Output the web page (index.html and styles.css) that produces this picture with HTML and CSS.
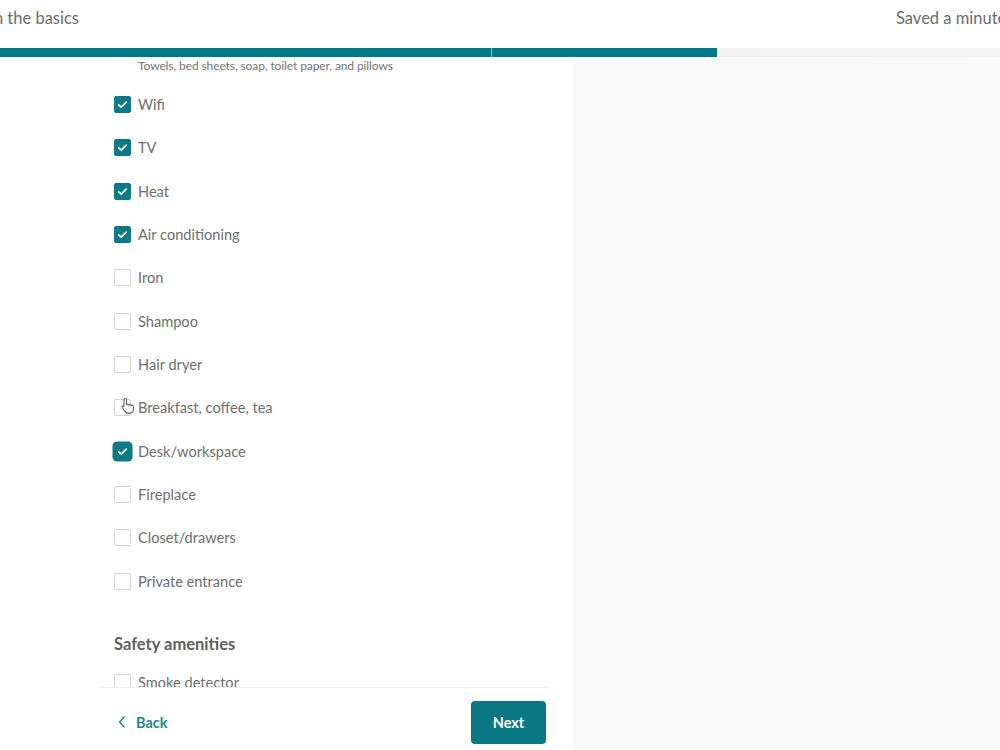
FILE: index.html
```html
<!DOCTYPE html>
<html lang="en">
<head>
  <meta charset="utf-8">
  <title>List your space - Amenities</title>
  <link rel="stylesheet" href="styles.css">
</head>
<body>

<div class="topbar">
  <div class="step-title"><span>Step 1: Start with the basics</span></div>
  <div class="saved">Saved a minute ago</div>
</div>

<div class="progress">
  <div class="progress-done"></div>
  <div class="progress-done short"></div>
</div>

<div class="page">
  <div class="form-panel">
    <div class="scroll-area">
      <p class="hint">Towels, bed sheets, soap, toilet paper, and pillows</p>

      <ul class="amenities">
        <li><span class="box checked"><svg viewBox="0 0 16 16"><path d="M4 8.3l2.6 2.5L12 5.4"/></svg></span>Wifi</li>
        <li><span class="box checked"><svg viewBox="0 0 16 16"><path d="M4 8.3l2.6 2.5L12 5.4"/></svg></span>TV</li>
        <li><span class="box checked"><svg viewBox="0 0 16 16"><path d="M4 8.3l2.6 2.5L12 5.4"/></svg></span>Heat</li>
        <li><span class="box checked"><svg viewBox="0 0 16 16"><path d="M4 8.3l2.6 2.5L12 5.4"/></svg></span>Air conditioning</li>
        <li><span class="box"></span>Iron</li>
        <li><span class="box"></span>Shampoo</li>
        <li><span class="box"></span>Hair dryer</li>
        <li class="hovered">
          <span class="box"></span>Breakfast, coffee, tea
          <svg class="pointer" viewBox="0 0 14 18">
            <path d="M4.5 1.5c.8 0 1.4.6 1.4 1.4v5.3c.2-.6.8-1 1.4-.9.7.1 1.1.6 1.2 1.2.3-.5.8-.8 1.4-.7.7.1 1.1.7 1.1 1.3.3-.4.8-.6 1.3-.5.7.2 1 .8 1 1.5v3.2c0 2.2-1.7 3.9-3.9 3.9H7.6c-1.2 0-2.2-.5-2.9-1.4L1.3 11.2c-.4-.5-.3-1.2.2-1.6.5-.4 1.2-.4 1.6.1l.1.1V2.9c0-.8.5-1.4 1.3-1.4z"/>
          </svg>
        </li>
        <li><span class="box checked focused"><svg viewBox="0 0 16 16"><path d="M4 8.3l2.6 2.5L12 5.4"/></svg></span>Desk/workspace</li>
        <li><span class="box"></span>Fireplace</li>
        <li><span class="box"></span>Closet/drawers</li>
        <li><span class="box"></span>Private entrance</li>
      </ul>

      <h3 class="section-title">Safety amenities</h3>
      <ul class="amenities">
        <li><span class="box"></span>Smoke detector</li>
        <li><span class="box"></span>Carbon monoxide detector</li>
      </ul>
    </div>

    <div class="footer">
      <a class="back" href="#">
        <svg viewBox="0 0 10 16"><path d="M7.5 2L2 8l5.5 6"/></svg>
        <span>Back</span>
      </a>
      <button class="next">Next</button>
    </div>
  </div>

  <div class="side-panel"></div>
</div>

</body>
</html>
```

FILE: styles.css
```css
* {
  margin: 0;
  padding: 0;
  box-sizing: border-box;
}
body {
  width: 1000px;
  height: 750px;
  overflow: hidden;
  background-color: #ffffff;
  font-family: Lato, "Open Sans", Arial, sans-serif;
  color: #666666;
}

/* top bar */
.topbar {
  height: 48px;
  display: flex;
  align-items: center;
  justify-content: space-between;
  font-size: 16.5px;
  color: #6a6a6a;
  overflow: hidden;
  white-space: nowrap;
}
.step-title {
  width: 79px;
  display: flex;
  justify-content: flex-end;
  overflow: hidden;
  margin-top: -12px;
}
.saved {
  width: 104px;
  overflow: hidden;
  margin-top: -12px;
}

/* progress */
.progress {
  height: 9px;
  display: flex;
  background: linear-gradient(to right, #ececec, #f1f1f1 60%, #f4f4f4);
}
.progress-done {
  width: 492px;
  background-color: #007a87;
  border-right: 1px solid #7cc3cb;
}
.progress-done.short {
  width: 225px;
  border-right: none;
}

/* body */
.page {
  display: flex;
  height: 693px;
}
.form-panel {
  width: 574px;
  display: flex;
  flex-direction: column;
  background-color: #ffffff;
}
.side-panel {
  flex: 1;
  background-color: #fafafb;
}

.scroll-area {
  flex: 1;
  overflow: hidden;
  padding: 1px 0 0 114px;
}
.hint {
  font-size: 12px;
  line-height: 16px;
  color: #747474;
  margin-left: 24px;
  letter-spacing: -0.1px;
}

.amenities {
  list-style: none;
  margin-top: 9px;
}
.amenities li {
  height: 43.33px;
  display: flex;
  align-items: center;
  font-size: 14.6px;
  color: #6e6e6e;
  position: relative;
}
.box {
  width: 17px;
  height: 17px;
  margin-right: 7px;
  border: 1px solid #d2d2d2;
  border-radius: 2px;
  background-color: #ffffff;
  display: flex;
  align-items: center;
  justify-content: center;
}
.box svg {
  width: 15px;
  height: 15px;
  fill: none;
  stroke: #ffffff;
  stroke-width: 1.8;
  stroke-linecap: round;
  stroke-linejoin: round;
}
.box.checked {
  background-color: #0d7b86;
  border-color: #0d7b86;
}
.box.focused {
  box-shadow: 0 0 0 1.5px #0d7b86;
  border-radius: 3px;
}

.pointer {
  position: absolute;
  left: 7px;
  top: 11px;
  width: 13px;
  height: 17px;
  fill: #ffffff;
  stroke: #555555;
  stroke-width: 1.1;
}

.section-title {
  font-size: 16.5px;
  line-height: 24px;
  font-weight: bold;
  color: #606060;
  margin-top: 29px;
}
.section-title + .amenities {
  margin-top: 5px;
}

/* bottom nav */
.footer {
  height: 63px;
  margin-left: 100px;
  width: 448px;
  border-top: 1px solid #f0f0f0;
  display: flex;
  align-items: center;
  justify-content: space-between;
  padding: 6px 2px 0 18px;
  background-color: #ffffff;
}
.back {
  display: flex;
  align-items: center;
  gap: 10px;
  color: #1b8791;
  font-size: 14.5px;
  font-weight: bold;
  text-decoration: none;
}
.back svg {
  width: 8px;
  height: 14px;
  fill: none;
  stroke: #1b8791;
  stroke-width: 2;
  stroke-linecap: round;
  stroke-linejoin: round;
}
.next {
  width: 75px;
  height: 43px;
  border: none;
  border-radius: 4px;
  background-color: #0a7884;
  color: #ffffff;
  font-family: Lato, "Open Sans", Arial, sans-serif;
  font-size: 14.5px;
  font-weight: bold;
}
```
